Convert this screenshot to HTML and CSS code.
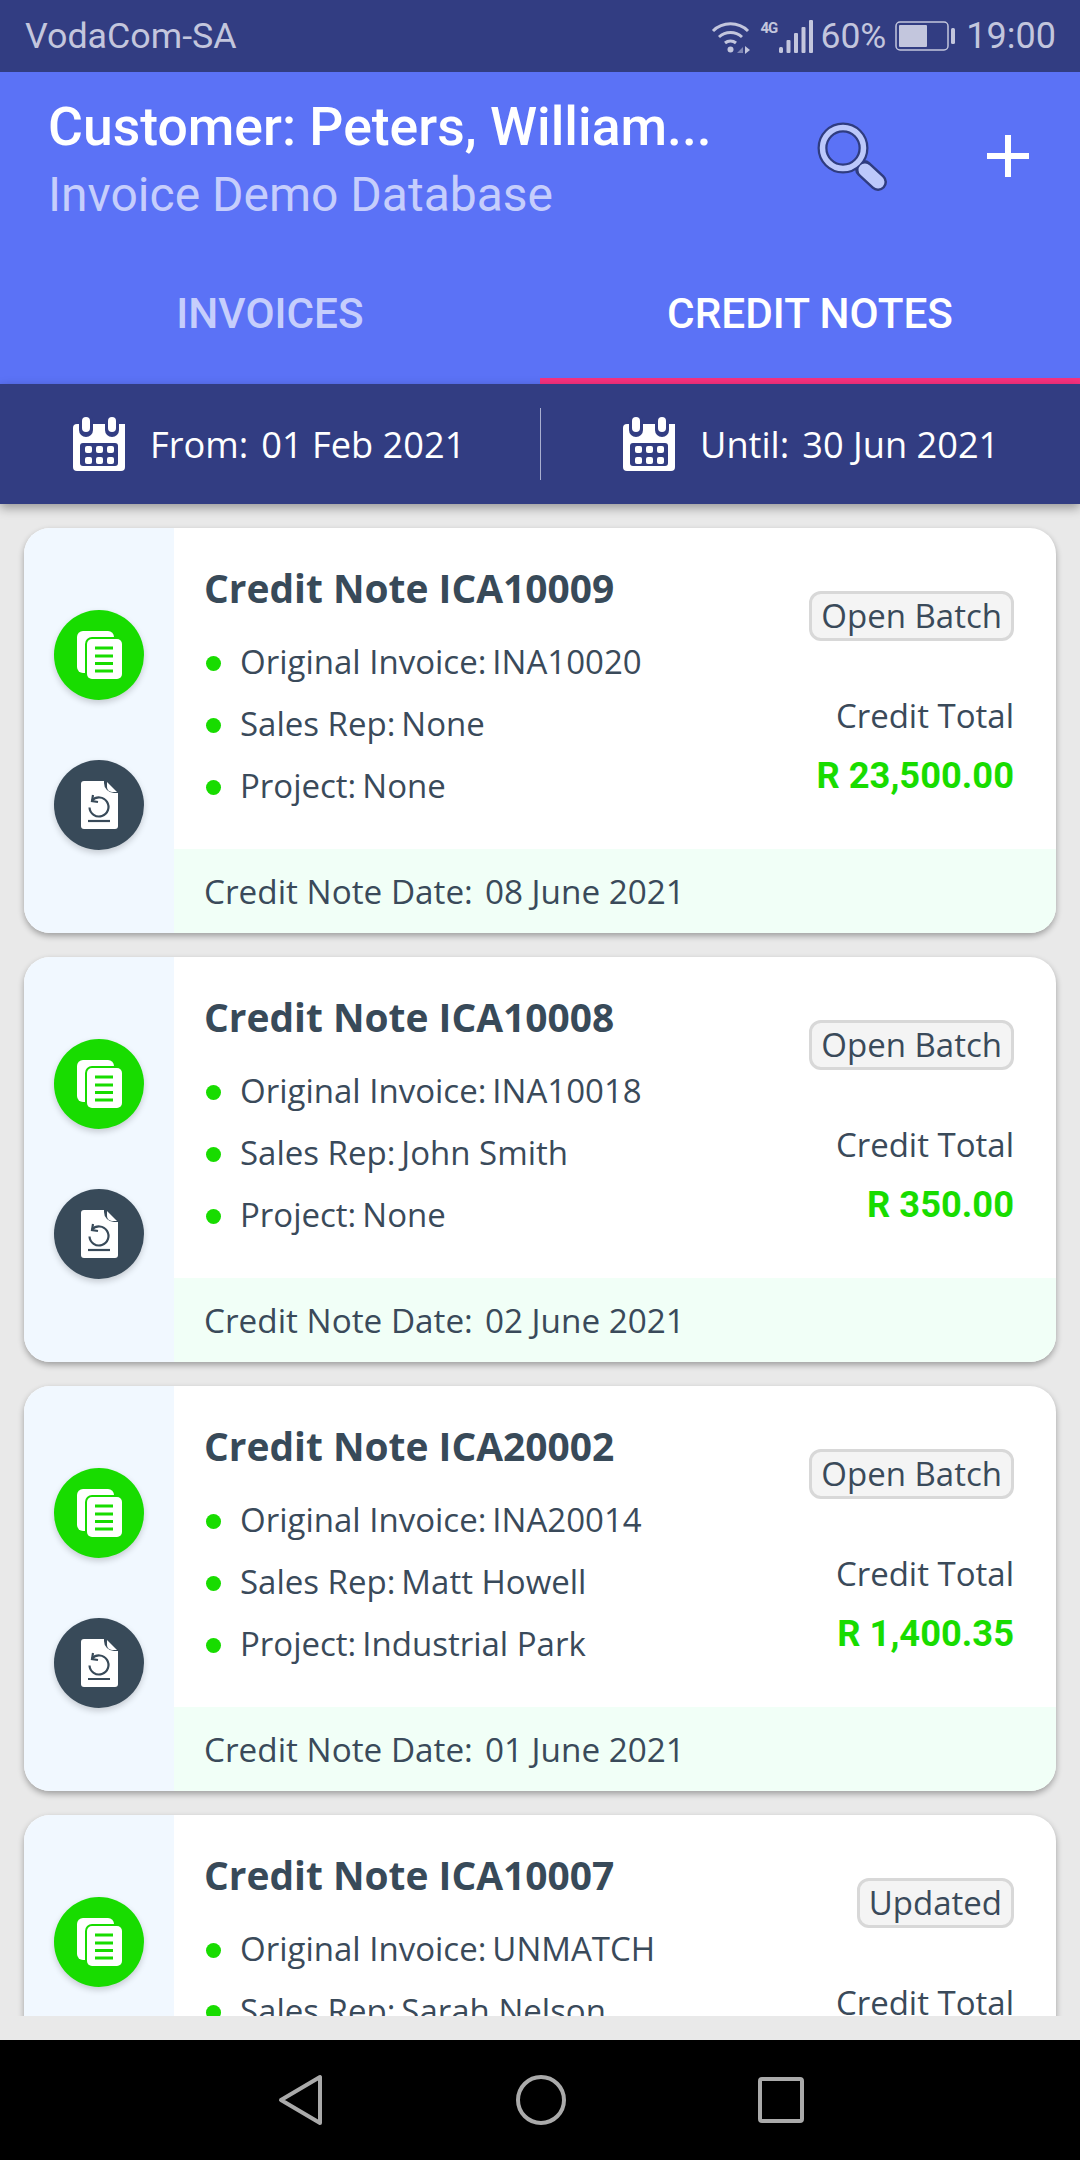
FILE: index.html
```html
<!DOCTYPE html>
<html lang="en">
<head>
<meta charset="utf-8">
<title>Credit Notes</title>
<link rel="stylesheet" href="styles.css">
</head>
<body>
<svg class="defs" width="0" height="0" aria-hidden="true">
  <defs>
    <symbol id="cal" viewBox="0 0 52 54">
      <path fill="#fff" d="M4 7h48v43a4 4 0 0 1-4 4H4a4 4 0 0 1-4-4V11a4 4 0 0 1 4-4z"/>
      <rect x="6" y="-3" width="14" height="23" rx="7" fill="#323d82"/>
      <rect x="32" y="-3" width="14" height="23" rx="7" fill="#323d82"/>
      <rect x="9" y="0" width="8" height="15" rx="4" fill="#fff"/>
      <rect x="35" y="0" width="8" height="15" rx="4" fill="#fff"/>
      <rect x="20" y="-1" width="12" height="8" fill="#323d82"/>
      <rect x="7" y="26" width="38" height="23" rx="3" fill="#323d82"/>
      <g fill="#fff">
        <rect x="12" y="29" width="7" height="7" rx="2"/><rect x="23" y="29" width="7" height="7" rx="2"/><rect x="34" y="29" width="7" height="7" rx="2"/>
        <rect x="12" y="40" width="7" height="7" rx="2"/><rect x="23" y="40" width="7" height="7" rx="2"/><rect x="34" y="40" width="7" height="7" rx="2"/>
      </g>
    </symbol>
    <symbol id="docs" viewBox="0 0 90 90">
      <rect x="23" y="21" width="37" height="42" rx="6" fill="#fff"/>
      <rect x="31" y="27" width="39" height="44" rx="7" fill="#18dc00"/>
      <rect x="33" y="29" width="35" height="40" rx="5" fill="#fff"/>
      <g stroke="#18dc00" stroke-width="3">
        <path d="M41 38h18M41 46h18M41 53.500h18M41 61h18"/>
      </g>
    </symbol>
    <symbol id="ret" viewBox="0 0 90 90">
      <path fill="#fff" d="M30 21h22l12 12v33a3 3 0 0 1-3 3H30a3 3 0 0 1-3-3V24a3 3 0 0 1 3-3z"/>
      <path fill="#384a59" d="M50 19h16v14h-6a10 10 0 0 1-10-10z"/>
      <path fill="#fff" d="M53 22l10 10h-5a5 5 0 0 1-5-5z"/>
      <g fill="none" stroke="#384a59" stroke-width="2.200">
        <path d="M34 61h22"/>
        <path d="M38 40.500a9.500 9.500 0 1 1-2.500 7"/>
        <path d="M39 35l-1 6 6 1"/>
      </g>
    </symbol>
  </defs>
</svg>

<div class="status">
  <span class="carrier">VodaCom-SA</span>
  <div class="status-right">
    <svg class="wifi" width="40" height="34" viewBox="0 0 40 34">
      <g fill="none" stroke="#c3c6dd" stroke-width="3">
        <path d="M2 11a25 25 0 0 1 35 0"/>
        <path d="M8 17a17 17 0 0 1 23 0"/>
        <path d="M14 23a8.500 8.500 0 0 1 11 0"/>
      </g>
      <circle cx="19.500" cy="29.500" r="3" fill="#c3c6dd"/>
      <path d="M26 33l6-6v6z" fill="#7f86b4"/>
      <path d="M34 26l5 4-5 4z" fill="#c3c6dd"/>
    </svg>
    <span class="net">4G</span>
    <svg class="bars" width="34" height="33" viewBox="0 0 34 33">
      <g fill="#c3c6dd">
        <rect x="0" y="27" width="4" height="6" rx="1.500"/>
        <rect x="7.500" y="20" width="4" height="13" rx="1"/>
        <rect x="15" y="13" width="4" height="20" rx="1"/>
        <rect x="22.500" y="7" width="4" height="26" rx="1"/>
        <rect x="30" y="0" width="4" height="33" rx="1"/>
      </g>
    </svg>
    <span class="pct">60%</span>
    <svg class="batt" width="60" height="30" viewBox="0 0 60 30">
      <rect x="1" y="1" width="52" height="28" rx="4" fill="none" stroke="#c3c6dd" stroke-width="1.500"/>
      <rect x="4" y="4" width="28" height="22" rx="1" fill="#c3c6dd"/>
      <rect x="56" y="7" width="4" height="16" rx="1.500" fill="#c3c6dd"/>
    </svg>
    <span class="clock">19:00</span>
  </div>
</div>

<header class="appbar">
  <div class="appbar-top">
    <div class="titles">
      <div class="title">Customer: Peters, William...</div>
      <div class="subtitle">Invoice Demo Database</div>
    </div>
    <svg class="search" width="72" height="72" viewBox="0 0 72 72">
      <path d="M47 47l14 13" stroke="#2f3c80" stroke-width="18" stroke-linecap="round" fill="none"/>
      <circle cx="26" cy="26" r="20.500" fill="none" stroke="#2f3c80" stroke-width="10"/>
      <circle cx="26" cy="26" r="20.500" fill="none" stroke="#bcc8fb" stroke-width="5.500"/>
      <path d="M48 48l13 12" stroke="#bcc8fb" stroke-width="13" stroke-linecap="round" fill="none"/>
    </svg>
    <svg class="plus" width="44" height="44" viewBox="0 0 44 44">
      <path d="M22 1v42M1 22h42" stroke="#fff" stroke-width="6" fill="none"/>
    </svg>
  </div>
  <nav class="tabs">
    <div class="tab">INVOICES</div>
    <div class="tab tab-on">CREDIT NOTES</div>
  </nav>
</header>

<div class="datebar">
  <div class="range">
    <svg class="calicon"><use href="#cal"/></svg>
    <span class="range-label">From:</span><span class="range-value">01 Feb 2021</span>
  </div>
  <div class="range range-r">
    <svg class="calicon"><use href="#cal"/></svg>
    <span class="range-label">Until:</span><span class="range-value">30 Jun 2021</span>
  </div>
</div>

<main class="list">
  <article class="card">
    <aside class="side">
      <span class="disc disc-g"><svg class="discicon"><use href="#docs"/></svg></span>
      <span class="disc disc-d"><svg class="discicon"><use href="#ret"/></svg></span>
    </aside>
    <div class="content">
      <div class="body">
        <div class="info">
          <h2 class="name">Credit Note ICA10009</h2>
          <ul class="facts">
            <li class="fact"><span>Original Invoice:</span><span class="val">INA10020</span></li>
            <li class="fact"><span>Sales Rep:</span><span class="val">None</span></li>
            <li class="fact"><span>Project:</span><span class="val">None</span></li>
          </ul>
        </div>
        <div class="money">
          <span class="badge">Open Batch</span>
          <span class="total-label">Credit Total</span>
          <span class="total">R 23,500.00</span>
        </div>
      </div>
      <footer class="foot"><span>Credit Note Date:</span><span class="foot-val">08 June 2021</span></footer>
    </div>
  </article>

  <article class="card">
    <aside class="side">
      <span class="disc disc-g"><svg class="discicon"><use href="#docs"/></svg></span>
      <span class="disc disc-d"><svg class="discicon"><use href="#ret"/></svg></span>
    </aside>
    <div class="content">
      <div class="body">
        <div class="info">
          <h2 class="name">Credit Note ICA10008</h2>
          <ul class="facts">
            <li class="fact"><span>Original Invoice:</span><span class="val">INA10018</span></li>
            <li class="fact"><span>Sales Rep:</span><span class="val">John Smith</span></li>
            <li class="fact"><span>Project:</span><span class="val">None</span></li>
          </ul>
        </div>
        <div class="money">
          <span class="badge">Open Batch</span>
          <span class="total-label">Credit Total</span>
          <span class="total">R 350.00</span>
        </div>
      </div>
      <footer class="foot"><span>Credit Note Date:</span><span class="foot-val">02 June 2021</span></footer>
    </div>
  </article>

  <article class="card">
    <aside class="side">
      <span class="disc disc-g"><svg class="discicon"><use href="#docs"/></svg></span>
      <span class="disc disc-d"><svg class="discicon"><use href="#ret"/></svg></span>
    </aside>
    <div class="content">
      <div class="body">
        <div class="info">
          <h2 class="name">Credit Note ICA20002</h2>
          <ul class="facts">
            <li class="fact"><span>Original Invoice:</span><span class="val">INA20014</span></li>
            <li class="fact"><span>Sales Rep:</span><span class="val">Matt Howell</span></li>
            <li class="fact"><span>Project:</span><span class="val">Industrial Park</span></li>
          </ul>
        </div>
        <div class="money">
          <span class="badge">Open Batch</span>
          <span class="total-label">Credit Total</span>
          <span class="total">R 1,400.35</span>
        </div>
      </div>
      <footer class="foot"><span>Credit Note Date:</span><span class="foot-val">01 June 2021</span></footer>
    </div>
  </article>

  <article class="card">
    <aside class="side">
      <span class="disc disc-g"><svg class="discicon"><use href="#docs"/></svg></span>
      <span class="disc disc-d"><svg class="discicon"><use href="#ret"/></svg></span>
    </aside>
    <div class="content">
      <div class="body">
        <div class="info">
          <h2 class="name">Credit Note ICA10007</h2>
          <ul class="facts">
            <li class="fact"><span>Original Invoice:</span><span class="val">UNMATCH</span></li>
            <li class="fact"><span>Sales Rep:</span><span class="val">Sarah Nelson</span></li>
          </ul>
        </div>
        <div class="money">
          <span class="badge">Updated</span>
          <span class="total-label">Credit Total</span>
        </div>
      </div>
    </div>
  </article>
</main>

<nav class="sysnav">
  <svg width="48" height="54" viewBox="0 0 48 54" class="nav-back">
    <path d="M44 4v46L5 27z" fill="none" stroke="#aaa" stroke-width="4" stroke-linejoin="round"/>
  </svg>
  <svg width="50" height="50" viewBox="0 0 50 50">
    <circle cx="25" cy="25" r="23" fill="none" stroke="#aaa" stroke-width="4"/>
  </svg>
  <svg width="46" height="46" viewBox="0 0 46 46" class="nav-sq">
    <rect x="2" y="2" width="42" height="42" rx="2" fill="none" stroke="#aaa" stroke-width="4"/>
  </svg>
</nav>
</body>
</html>
```
FILE: styles.css
```css
* { box-sizing: border-box; }
html, body { margin: 0; padding: 0; }
body {
  width: 1080px;
  height: 2160px;
  overflow: hidden;
  display: flex;
  flex-direction: column;
  background: #e9e9e9;
  font-family: "Open Sans", "Liberation Sans", sans-serif;
  color: #3a4a5a;
}
.defs { position: absolute; }

.status {
  height: 72px;
  flex: none;
  background: #323d82;
  color: #c3c6dd;
  font-family: Roboto, sans-serif;
  font-size: 36px;
  display: flex;
  align-items: center;
  justify-content: space-between;
  padding: 0 24px 0 25px;
}
.carrier { font-size: 35.800px; }
.status-right { display: flex; align-items: center; }
.wifi { margin-right: 9px; margin-top: 2px; }
.net { font-size: 15px; font-weight: 700; width: 19px; margin-bottom: 17px; letter-spacing: -1px; }
.pct { font-size: 35.500px; margin-left: 7px; margin-right: 9px; }
.batt { margin-right: 11px; }

.appbar { flex: none; background: #5b72f6; height: 312px; }
.appbar-top {
  height: 168px;
  display: flex;
  align-items: flex-start;
  padding: 21px 0 0 48px;
}
.titles { width: 769px; font-family: Roboto, sans-serif; flex: none; }
.title { font-size: 53.500px; line-height: 67px; font-weight: 500; color: #fff; white-space: nowrap; }
.subtitle { font-size: 48px; line-height: 67px; margin-top: 1px; color: #c6cefc; white-space: nowrap; }
.search { margin-top: 29px; flex: none; }
.plus { margin: 41px 0 0 97px; flex: none; }

.tabs { display: flex; height: 144px; }
.tab {
  flex: 1;
  display: flex;
  align-items: center;
  justify-content: center;
  font-family: Roboto, sans-serif;
  font-size: 42.300px;
  font-weight: 500;
  color: #c6cefc;
  padding-top: 2px;
}
.tab-on { color: #fff; border-bottom: 6px solid #f7317f; padding-top: 8px; }

.datebar {
  flex: none;
  height: 120px;
  background: #323d82;
  color: #fff;
  display: flex;
  align-items: center;
  position: relative;
  box-shadow: 0 4px 10px rgba(0,0,0,.35);
  font-size: 36.200px;
}
.range { flex: 0 0 540px; height: 72px; display: flex; align-items: center; padding-left: 73px; }
.range-r { border-left: 1px solid #a9afd0; padding-left: 82px; }
.calicon { width: 52px; height: 54px; flex: none; margin-right: 25px; overflow: visible; }
.range-value { margin-left: 13px; }

.list {
  flex: none;
  height: 1512px;
  margin-bottom: 24px;
  padding: 24px 24px 0;
  overflow: hidden;
}
.card {
  display: flex;
  height: 405px;
  margin-bottom: 24px;
  background: #fff;
  border-radius: 26px;
  box-shadow: 0 3px 6px rgba(0,0,0,.32);
  overflow: hidden;
}
.side {
  flex: none;
  width: 150px;
  background: #f1f8ff;
  display: flex;
  flex-direction: column;
  align-items: center;
  padding-top: 82px;
  gap: 60px;
}
.disc {
  width: 90px;
  height: 90px;
  border-radius: 50%;
  flex: none;
  box-shadow: 0 3px 6px rgba(0,0,0,.18);
}
.disc-g { background: #18dc00; }
.disc-d { background: #384a59; }
.discicon { display: block; width: 90px; height: 90px; }

.content { flex: 1; display: flex; flex-direction: column; min-width: 0; }
.body {
  height: 321px;
  flex: none;
  display: flex;
  justify-content: space-between;
  padding: 0 42px 0 30px;
}
.name {
  margin: 0;
  padding-top: 35px;
  font-size: 38.900px;
  line-height: 50px;
  font-weight: 700;
  color: #384a59;
}
.facts { list-style: none; margin: 18px 0 0; padding: 0; }
.fact {
  font-size: 33px;
  line-height: 62px;
  display: flex;
  align-items: center;
  white-space: nowrap;
}
.fact::before {
  content: "";
  width: 15px;
  height: 15px;
  border-radius: 50%;
  background: #18dc00;
  margin: 3px 19px 0 2px;
  flex: none;
}
.val { margin-left: 6px; }

.money {
  display: flex;
  flex-direction: column;
  align-items: flex-end;
  padding-top: 63px;
}
.badge {
  height: 50px;
  padding: 0 9px;
  border: 3px solid #d8d8d8;
  border-radius: 12px;
  background: #f4f4f4;
  font-size: 33px;
  line-height: 44px;
  white-space: nowrap;
}
.total-label { margin-top: 48px; font-size: 33px; line-height: 54px; }
.total {
  margin-top: 8px;
  font-family: Roboto, sans-serif;
  font-weight: 700;
  font-size: 36.300px;
  line-height: 50px;
  color: #18dc00;
}
.foot {
  height: 84px;
  flex: none;
  background: #f1fff7;
  padding-left: 30px;
  display: flex;
  align-items: center;
  font-size: 33.300px;
}
.foot-val { margin-left: 12px; }

.sysnav {
  flex: none;
  height: 120px;
  background: #000;
  display: flex;
  align-items: center;
  justify-content: center;
}
.sysnav svg { display: block; }
.nav-back { margin-right: 191px; transform: translateX(-1px); }
.nav-sq { margin-left: 192px; }
```
